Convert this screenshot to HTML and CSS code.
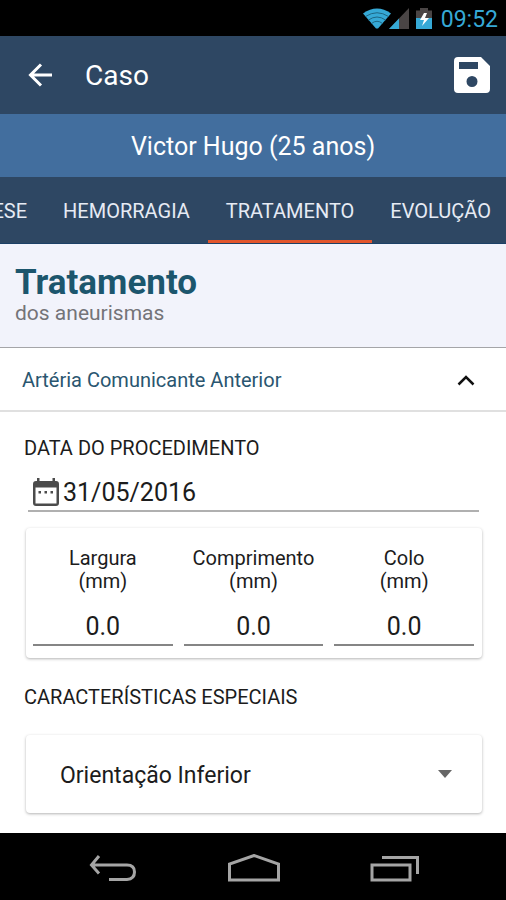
FILE: index.html
```html
<!DOCTYPE html>
<html lang="pt-BR">
<head>
<meta charset="utf-8">
<meta name="viewport" content="width=device-width, initial-scale=1">
<title>Caso</title>
<link rel="stylesheet" href="styles.css">
</head>
<body>
<div class="status">
  <svg class="status-icons" width="70" height="22" viewBox="0 0 70 22" aria-hidden="true">
    <path d="M0 5.500Q14 -4.500 28 5.500L15 20.500H13Z" fill="#36a9d6"/>
    <path d="M2.500 8.500Q14 1 25.500 8.500M5.500 12Q14 6 22.500 12M8.500 15.500Q14 11 19.500 15.500" fill="none" stroke="#1d6684" stroke-width="1"/>
    <path d="M46 0V21H26Z" fill="#4a4545"/>
    <path d="M36 10.500V21H26Z" fill="#36a9d6"/>
    <path d="M53 2.500H57V0H65V2.500H69V21H53Z" fill="#4a4545"/>
    <path d="M53 10H69V21H53Z" fill="#36a9d6"/>
    <path d="M61 5L57 12H61L59 18L66 10H62L64 5Z" fill="#fff"/>
  </svg>
  <span>09:52</span>
</div>
<header class="appbar">
  <button class="icon-btn" type="button" aria-label="Voltar">
    <svg width="24" height="24" viewBox="0 0 24 24"><path d="M24 12H3M13 1.500L2.500 12L13 22.500" fill="none" stroke="#fff" stroke-width="3"/></svg>
  </button>
  <h1>Caso</h1>
  <button class="icon-btn" type="button" aria-label="Salvar">
    <svg width="36" height="36" viewBox="0 0 36 36"><path fill="#fff" fill-rule="evenodd" d="M4 0H27L36 9V32Q36 36 32 36H4Q0 36 0 32V4Q0 0 4 0ZM5 5V12H24V5ZM18 19A5.500 5.500 0 1 0 18 30A5.500 5.500 0 1 0 18 19Z"/></svg>
  </button>
</header>
<div class="patient">Victor Hugo (25 anos)</div>
<nav class="tabs">
  <a href="#anamnese">ANAMNESE</a>
  <a href="#hemorragia">HEMORRAGIA</a>
  <a class="active" href="#tratamento" aria-current="page">TRATAMENTO</a>
  <a href="#evolucao">EVOLUÇÃO</a>
</nav>
<main>
  <div class="heading">
    <h2>Tratamento</h2>
    <p>dos aneurismas</p>
  </div>
  <button class="accordion" type="button" aria-expanded="true">
    <span>Artéria Comunicante Anterior</span>
    <svg width="18" height="12" viewBox="0 0 18 12" aria-hidden="true"><path d="M1.500 10.500L9 3L16.500 10.500" fill="none" stroke="#111" stroke-width="2.500"/></svg>
  </button>
  <form class="form">
    <label class="label" for="data">DATA DO PROCEDIMENTO</label>
    <div class="date">
      <svg width="26" height="28" viewBox="0 0 26 28" aria-hidden="true"><path fill="#4b4b4b" fill-rule="evenodd" d="M4 0H6.500V3H19.500V0H22V3H23Q26 3 26 6V25Q26 28 23 28H3Q0 28 0 25V6Q0 3 3 3H4ZM2.500 9.500V25.500H23.500V9.500ZM5.500 13H8V15.500H5.500ZM11.500 13H14V15.500H11.500ZM17.500 13H20V15.500H17.500Z"/></svg>
      <input id="data" type="text" value="31/05/2016">
    </div>
    <div class="card measures">
      <div class="measure"><label for="largura">Largura<br>(mm)</label><input id="largura" type="text" value="0.0"></div>
      <div class="measure"><label for="comprimento">Comprimento<br>(mm)</label><input id="comprimento" type="text" value="0.0"></div>
      <div class="measure"><label for="colo">Colo<br>(mm)</label><input id="colo" type="text" value="0.0"></div>
    </div>
    <label class="label" for="carac">CARACTERÍSTICAS ESPECIAIS</label>
    <div class="card select">
      <select id="carac"><option>Orientação Inferior</option></select>
      <svg width="14" height="8" viewBox="0 0 14 8" aria-hidden="true"><path d="M0 0H14L7 8Z" fill="#666"/></svg>
    </div>
  </form>
</main>
<footer class="navbar">
  <button type="button" aria-label="Voltar">
    <svg width="48" height="28" viewBox="0 0 48 28"><path d="M10 2L2.500 11L10 19.500M2.500 11H38Q45.500 11 45.500 18T38 25.500H20" fill="none" stroke="#a5a5a5" stroke-width="3"/></svg>
  </button>
  <button type="button" aria-label="Início">
    <svg width="52" height="28" viewBox="0 0 52 28"><path d="M1.500 26V10L26 1.500L50.500 10V26Z" fill="none" stroke="#a5a5a5" stroke-width="3"/></svg>
  </button>
  <button type="button" aria-label="Recentes">
    <svg width="50" height="28" viewBox="0 0 50 28"><path d="M2 11H40V26H2ZM12 3.500H47.500V20" fill="none" stroke="#a5a5a5" stroke-width="3"/></svg>
  </button>
</footer>
</body>
</html>
```
FILE: styles.css
```css
* { box-sizing: border-box; }
body {
  margin: 0;
  min-height: 100vh;
  display: flex;
  flex-direction: column;
  background: #fff;
  color: #1c1c1c;
  font-family: Roboto, "Liberation Sans", sans-serif;
}
h1, h2, p { margin: 0; font-weight: 400; }
button, input, select {
  appearance: none;
  border: 0;
  border-radius: 0;
  margin: 0;
  padding: 0;
  background: none;
  color: inherit;
  font: inherit;
  outline: 0;
}
svg { display: block; flex: none; }

.status {
  display: flex;
  align-items: center;
  justify-content: flex-end;
  gap: 8px;
  height: 36px;
  padding: 2px 8px 0;
  background: #000;
  color: #36a9d6;
  font-size: 23px;
}
.appbar {
  display: flex;
  align-items: center;
  height: 78px;
  padding: 0 16px 0 28px;
  background: #2e4763;
  color: #fff;
}
.appbar h1 {
  flex: 1;
  padding-left: 33px;
  font-size: 28px;
}
.patient {
  padding: 3px 16px 0;
  background: #426e9e;
  color: #fff;
  font-size: 25px;
  line-height: 60px;
  text-align: center;
}
.tabs {
  display: flex;
  justify-content: flex-end;
  overflow: hidden;
  background: #2e4763;
  border-bottom: 1px solid #1c4066;
}
.tabs a {
  flex: none;
  padding: 5px 18px 0;
  border-bottom: 3px solid transparent;
  color: #e6ebf4;
  font-size: 20px;
  line-height: 58px;
  text-decoration: none;
}
.tabs a:last-child { padding-right: 15px; }
.tabs .active { border-color: #e2552c; }

main { flex: 1; }
.heading {
  height: 104px;
  padding: 20px 15px 0;
  background: #f2f3fb;
  border-bottom: 1px solid #a5a5a8;
}
.heading h2 {
  color: #1c566d;
  font-size: 35px;
  font-weight: 700;
  line-height: 38px;
}
.heading p {
  color: #747478;
  font-size: 21px;
  line-height: 22px;
}
.accordion {
  display: flex;
  align-items: center;
  justify-content: space-between;
  width: 100%;
  height: 64px;
  padding: 2px 31px 0 22px;
  border-bottom: 2px solid #e0e0e0;
  color: #2a5670;
  font-size: 20px;
}
.form {
  display: flex;
  flex-direction: column;
  padding: 22px 24px 18px;
}
.label {
  font-size: 20px;
  line-height: 28px;
}
.date {
  display: flex;
  align-items: center;
  gap: 4px;
  height: 38px;
  margin: 12px 3px 16px 4px;
  padding-left: 5px;
  border-bottom: 2px solid #b0b0b0;
}
.date input {
  flex: 1;
  min-width: 0;
  font-size: 25px;
}
.card {
  border-radius: 4px;
  background: #fff;
  box-shadow: 0 1px 3px rgba(0, 0, 0, 0.3);
  margin-inline: 2px 0;
}
.measures {
  display: grid;
  grid-template-columns: repeat(3, minmax(0, 1fr));
  gap: 11px;
  height: 130px;
  margin-bottom: 25px;
  padding: 19px 8px 12px 7px;
}
.measure {
  display: flex;
  flex-direction: column;
  justify-content: space-between;
  text-align: center;
}
.measure label {
  font-size: 20px;
  line-height: 23px;
}
.measure input {
  width: 100%;
  height: 38px;
  border-bottom: 2px solid #858585;
  font-size: 25px;
  text-align: center;
}
.select {
  display: grid;
  align-items: center;
  margin-top: 24px;
}
.select select, .select svg { grid-area: 1 / 1; }
.select select {
  width: 100%;
  height: 78px;
  padding: 2px 48px 0 34px;
  font-size: 23px;
}
.select svg {
  justify-self: end;
  margin-right: 30px;
  pointer-events: none;
}
.navbar {
  display: flex;
  align-items: center;
  justify-content: space-between;
  height: 67px;
  padding: 2px 86px 0 89px;
  background: #000;
}
```
